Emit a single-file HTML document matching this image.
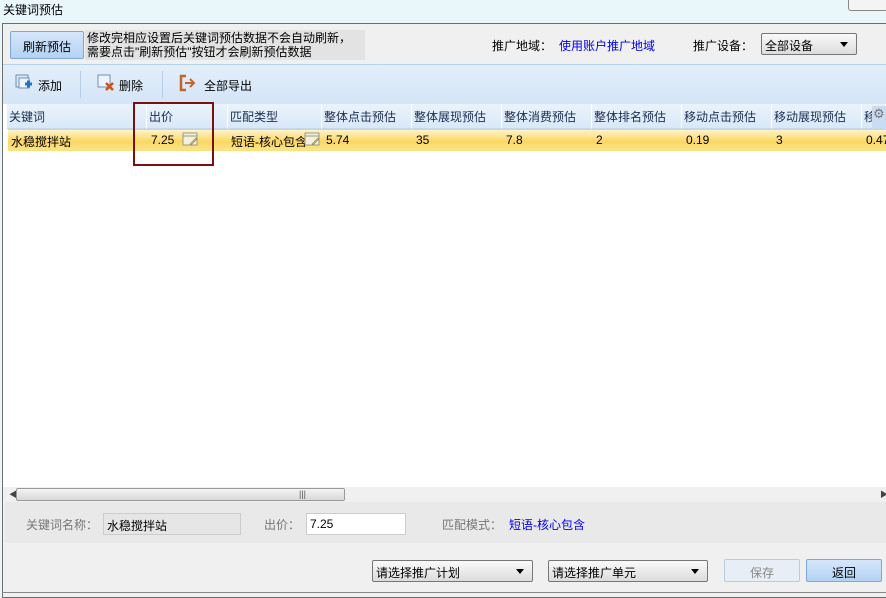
<!DOCTYPE html>
<html><head><meta charset="utf-8"><style>
*{margin:0;padding:0;box-sizing:border-box}
body{width:886px;height:596px;overflow:hidden;background:#e9f7fb;font-family:"Liberation Sans","Noto Sans CJK SC",sans-serif;font-size:12px;color:#000;position:relative}
.a{position:absolute;white-space:nowrap}
.win{position:absolute;left:2px;top:23px;width:890px;height:575px;background:#f0f0f0;border:1px solid #6e6e6e}
.hd{position:absolute;top:104px;height:25px;background:linear-gradient(#eaf3fc,#d9e8f8);border-right:1px solid #fff;border-bottom:1px solid #c4d8ee;padding:4px 0 0 2px;color:#1b2c50}
.cell{position:absolute;top:133px}
.sel{position:absolute;height:22px;border:1px solid #777;border-radius:2px;background:linear-gradient(#fafafa,#dcdcdc);padding:3px 0 0 3px}
.sel:after{content:"";position:absolute;right:8px;top:8px;border:4px solid transparent;border-top:5px solid #000}
</style></head><body>
<div class="a" style="left:3px;top:1px;font-size:12px">关键词预估</div>
<div class="a" style="left:848px;top:-4px;width:40px;height:15px;border:1px solid #888;border-radius:3px;background:#f4f4f4"></div>
<div class="win"></div>
<!-- top area -->
<div class="a" style="left:10px;top:31px;width:74px;height:28px;border:1px solid #7fa8d8;border-radius:2px;background:linear-gradient(#d6e7fb,#b3d2f4);text-align:center;padding-top:6px">刷新预估</div>
<div class="a" style="left:85px;top:30px;width:280px;height:30px;background:#e3e3e3;line-height:14px;padding:1px 0 0 2px">修改完相应设置后关键词预估数据不会自动刷新，<br>需要点击"刷新预估"按钮才会刷新预估数据</div>
<div class="a" style="left:492px;top:37px">推广地域：</div>
<div class="a" style="left:559px;top:37px;color:#0000ee">使用账户推广地域</div>
<div class="a" style="left:693px;top:37px">推广设备：</div>
<div class="sel" style="left:761px;top:33px;width:96px">全部设备</div>
<!-- toolbar -->
<div class="a" style="left:3px;top:64px;width:883px;height:40px;border-top:1px solid #b5d2ef;background:linear-gradient(#e3eefa,#d4e5f7)"></div>
<div class="a" style="left:80px;top:71px;width:1px;height:27px;background:#b5cde6"></div>
<div class="a" style="left:162px;top:71px;width:1px;height:27px;background:#b5cde6"></div>
<svg class="a" style="left:15px;top:74px" width="18" height="18"><rect x="1" y="1" width="12" height="12" fill="#dde8f4" stroke="#6d8fb5"/><rect x="4" y="4" width="10" height="10" fill="#eef4fb" stroke="#6d8fb5"/><path d="M10 10h7M13.5 6.5v7" stroke="#1a76c9" stroke-width="3"/></svg>
<div class="a" style="left:38px;top:77px">添加</div>
<svg class="a" style="left:97px;top:74px" width="18" height="18"><rect x="1" y="1" width="12" height="12" fill="#eef4fb" stroke="#6d8fb5"/><path d="M9 9l7 7M16 9l-7 7" stroke="#c8531f" stroke-width="2.5"/></svg>
<div class="a" style="left:119px;top:77px">删除</div>
<svg class="a" style="left:179px;top:74px" width="18" height="18"><path d="M7 2H2v14h5" fill="none" stroke="#c8622b" stroke-width="2.5"/><path d="M6 9h8M11 5l4 4-4 4" fill="none" stroke="#c8622b" stroke-width="2"/></svg>
<div class="a" style="left:204px;top:77px">全部导出</div>
<!-- grid -->
<div class="a" style="left:3px;top:104px;width:883px;height:383px;background:#fff"></div>
<div class="hd" style="left:7px;width:140px">关键词</div>
<div class="hd" style="left:147px;width:81px">出价</div>
<div class="hd" style="left:228px;width:94px">匹配类型</div>
<div class="hd" style="left:322px;width:90px">整体点击预估</div>
<div class="hd" style="left:412px;width:90px">整体展现预估</div>
<div class="hd" style="left:502px;width:90px">整体消费预估</div>
<div class="hd" style="left:592px;width:90px">整体排名预估</div>
<div class="hd" style="left:682px;width:90px">移动点击预估</div>
<div class="hd" style="left:772px;width:90px">移动展现预估</div>
<div class="hd" style="left:862px;width:24px">移</div>
<div class="a" style="left:872px;top:106px;width:14px;height:22px;background:#c9dcf1;color:#777;font-size:13px;padding-left:1px">⚙</div>
<div class="a" style="left:8px;top:129px;width:878px;height:22px;background:linear-gradient(#fff3c8,#fbd660 60%,#fbe38e);border-top:1px solid #f1d47a;border-bottom:1px solid #f5e27a"></div>
<div class="cell a" style="left:11px">水稳搅拌站</div>
<div class="cell a" style="left:151px">7.25</div>
<svg class="a" style="left:182px;top:131px" width="17" height="16"><rect x="1" y="2" width="14" height="12" fill="#f3f0e0" stroke="#9a9a80"/><path d="M1 5h14" stroke="#9a9a80"/><path d="M8 13l6-6 1 1-6 6z" fill="#d8c878" stroke="#8a8a60" stroke-width=".7"/></svg>
<div class="cell a" style="left:231px">短语-核心包含</div>
<svg class="a" style="left:304px;top:131px" width="17" height="16"><rect x="1" y="2" width="14" height="12" fill="#f3f0e0" stroke="#9a9a80"/><path d="M1 5h14" stroke="#9a9a80"/><path d="M8 13l6-6 1 1-6 6z" fill="#d8c878" stroke="#8a8a60" stroke-width=".7"/></svg>
<div class="cell a" style="left:326px">5.74</div>
<div class="cell a" style="left:416px">35</div>
<div class="cell a" style="left:506px">7.8</div>
<div class="cell a" style="left:596px">2</div>
<div class="cell a" style="left:686px">0.19</div>
<div class="cell a" style="left:776px">3</div>
<div class="cell a" style="left:866px">0.47</div>
<div class="a" style="left:133px;top:102px;width:81px;height:64px;border:2px solid #7b1010"></div>
<!-- scrollbar -->
<div class="a" style="left:3px;top:487px;width:883px;height:15px;background:#f0f0f0"></div>
<div class="a" style="left:9px;top:489px;font-size:8px;color:#444">◀</div>
<div class="a" style="left:16px;top:488px;width:329px;height:13px;border:1px solid #999;border-radius:2px;background:linear-gradient(#f4f4f4,#d8d8d8)"></div>
<div class="a" style="left:299px;top:489px;font-size:9px;color:#555">|||</div>
<div class="a" style="left:880px;top:489px;font-size:8px;color:#444">▶</div>
<!-- bottom panel -->
<div class="a" style="left:5px;top:502px;width:881px;height:41px;background:#e9e9e9"></div>
<div class="a" style="left:26px;top:516px;color:#777">关键词名称：</div>
<div class="a" style="left:103px;top:513px;width:138px;height:22px;background:#e6e6e6;border:1px solid #ccc;padding:3px 0 0 3px">水稳搅拌站</div>
<div class="a" style="left:264px;top:516px;color:#777">出价：</div>
<div class="a" style="left:306px;top:513px;width:100px;height:22px;background:#fff;border:1px solid #ccc;padding:3px 0 0 3px">7.25</div>
<div class="a" style="left:442px;top:516px;color:#777">匹配模式：</div>
<div class="a" style="left:509px;top:516px;color:#0000ee">短语-核心包含</div>
<div class="sel" style="left:372px;top:560px;width:161px">请选择推广计划</div>
<div class="sel" style="left:548px;top:560px;width:160px">请选择推广单元</div>
<div class="a" style="left:724px;top:559px;width:76px;height:23px;border:1px solid #b8cde2;border-radius:2px;background:#e8eef5;color:#888;text-align:center;padding-top:4px">保存</div>
<div class="a" style="left:806px;top:559px;width:76px;height:23px;border:1px solid #7fa8d8;border-radius:2px;background:linear-gradient(#d6e7fb,#b3d2f4);text-align:center;padding-top:4px">返回</div>
<div class="a" style="left:2px;top:592px;width:884px;height:1px;background:#888"></div>
</body></html>
